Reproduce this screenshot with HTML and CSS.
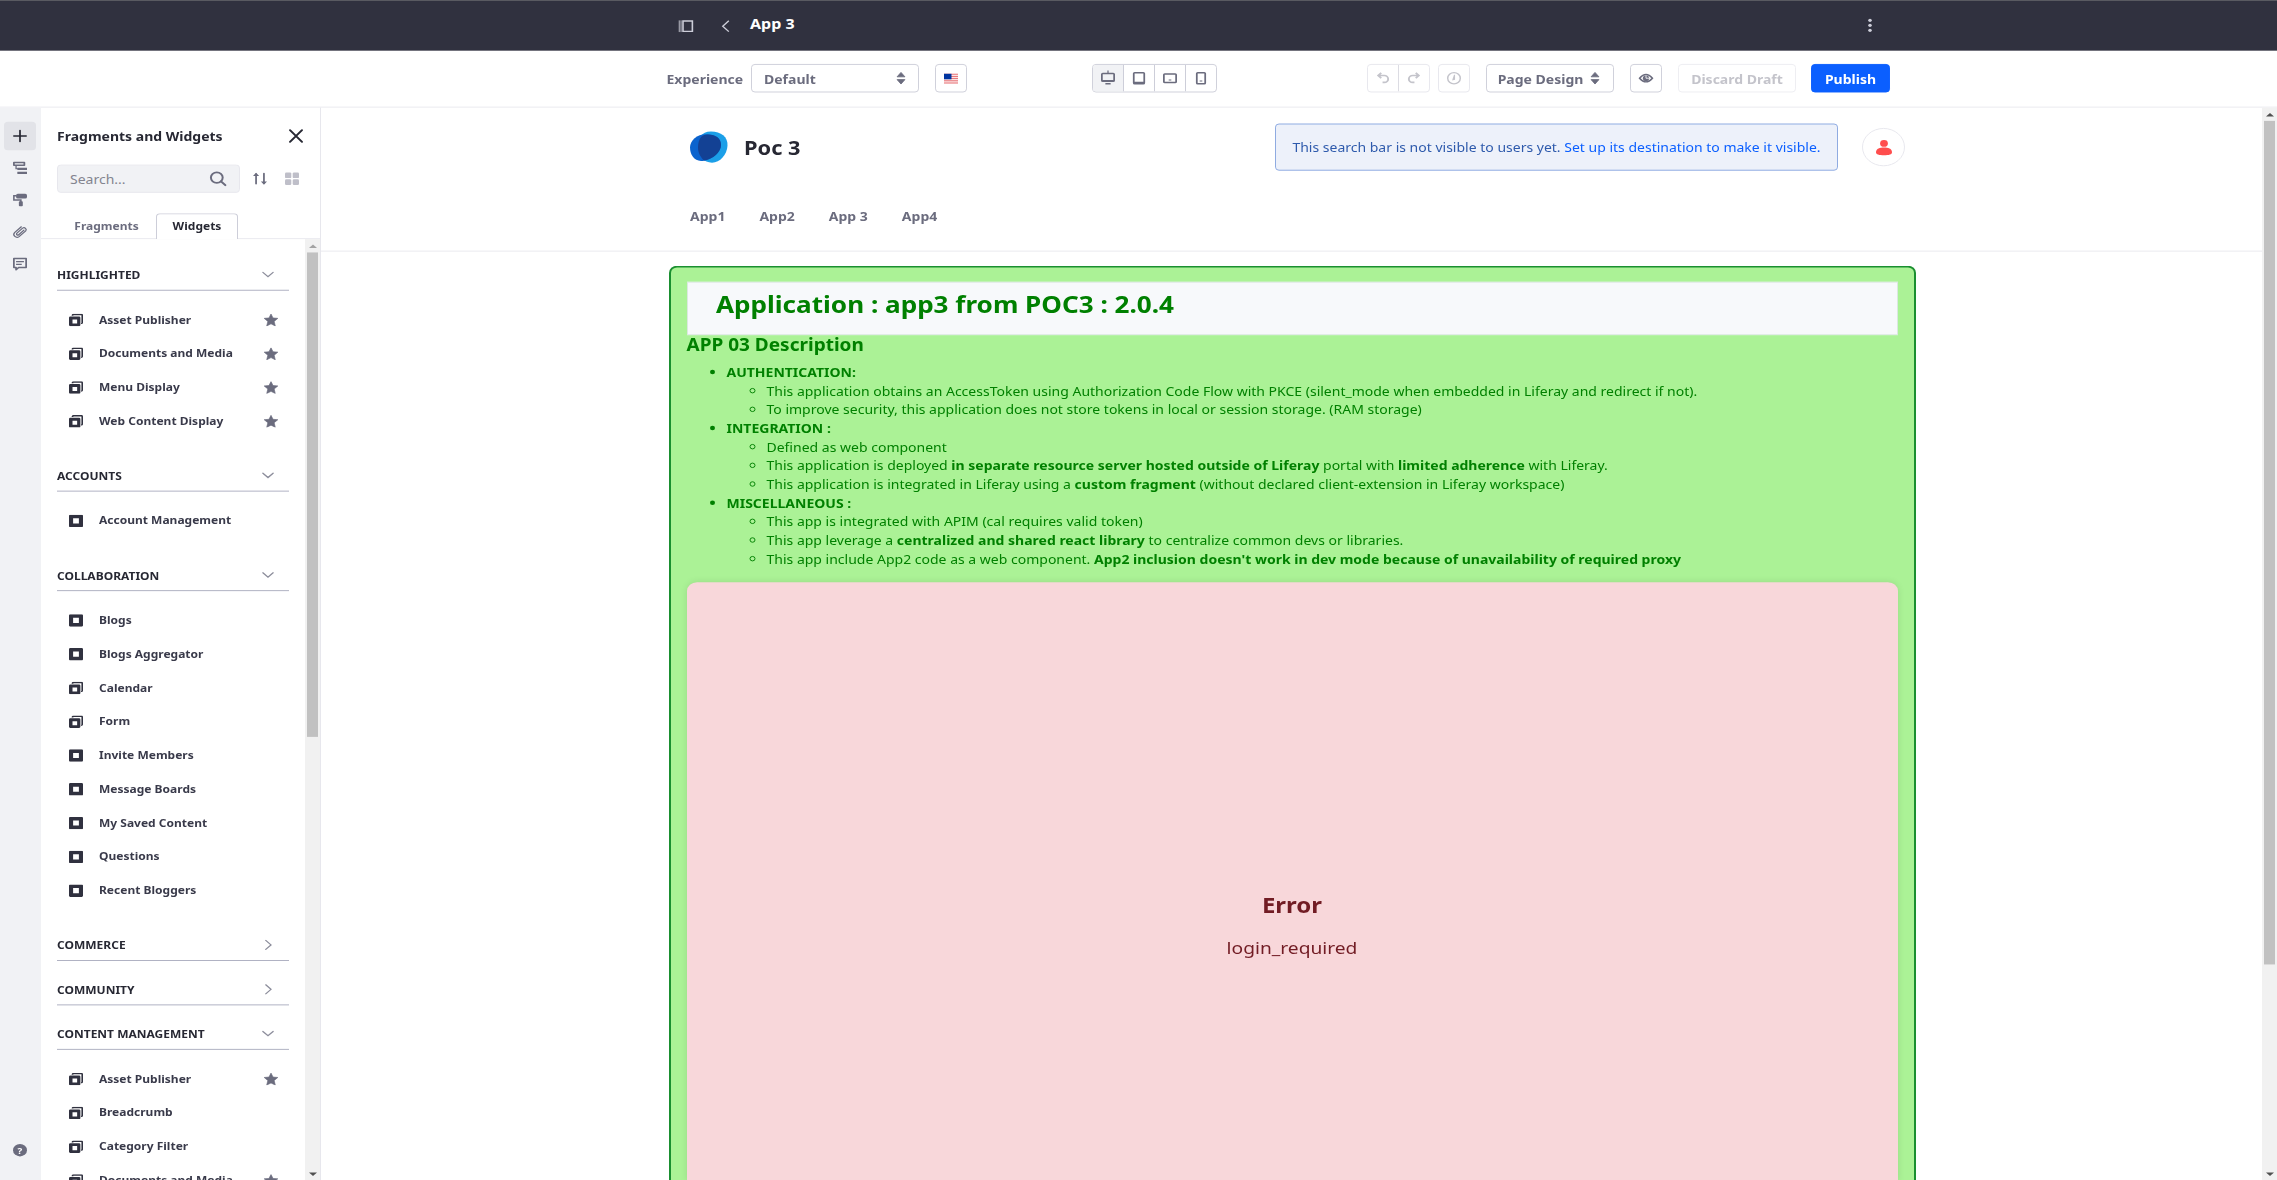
FILE: index.html
```html
<!DOCTYPE html>
<html lang="en">
<head>
<meta charset="utf-8">
<title>App 3</title>
<link rel="stylesheet" href="styles.css">
</head>
<body>
<svg class="sprite" aria-hidden="true">
  <symbol id="i-widget" viewBox="0 0 16 16"><path fill-rule="evenodd" d="M1.500 0h13A1.500 1.500 0 0 1 16 1.500v13a1.500 1.500 0 0 1-1.500 1.500h-13A1.500 1.500 0 0 1 0 14.500v-13A1.500 1.500 0 0 1 1.500 0zm3.200 4.600v6.600h6.600V4.600z"/></symbol>
  <symbol id="i-widgets" viewBox="0 0 16 16"><path fill-rule="evenodd" d="M1.500 3.500h10A1.500 1.500 0 0 1 13 5v9.500a1.500 1.500 0 0 1-1.500 1.500h-10A1.500 1.500 0 0 1 0 14.500V5a1.500 1.500 0 0 1 1.500-1.500zm2.500 3.700v5.300h5.300V7.200z"/><path d="M3 2.500C3 1 3.700 0 5 0h9.300A1.700 1.700 0 0 1 16 1.700v9.600c0 1.300-.8 2-2.200 2v-1.500h.4V1.900H5v.6z"/></symbol>
  <symbol id="i-star" viewBox="0 0 16 16"><path stroke="currentColor" stroke-width=".8" stroke-linejoin="round" d="M8 .3l2.300 5.100 5.500.5-4.200 3.900 1.300 5.900L8 12.900l-4.900 2.800 1.300-5.900L.2 5.900l5.500-.5z"/></symbol>
  <symbol id="i-down" viewBox="0 0 16 16"><path d="M1.200 4.500L8 11l6.800-6.500" fill="none" stroke="currentColor" stroke-width="1.800" stroke-linecap="round"/></symbol>
  <symbol id="i-right" viewBox="0 0 16 16"><path d="M5 1.200L12 8l-7 6.800" fill="none" stroke="currentColor" stroke-width="1.800" stroke-linecap="round"/></symbol>
  <symbol id="i-carets" viewBox="0 0 16 16"><path d="M8 .5l4.500 5.700H3.500zM8 15.500l4.500-5.700H3.500z" stroke="currentColor" stroke-linejoin="round"/></symbol>
</svg>
<div class="page">
  <header class="topbar">
    <svg class="ic16 productmenu" viewBox="0 0 16 16"><path d="M.8 1v14M2.700 1v14" stroke="currentColor" stroke-width="1"/><path d="M4.800 1.800h10v12.400h-10z" fill="none" stroke="currentColor" stroke-width="1.700"/></svg>
    <svg class="ic16 back" viewBox="0 0 16 16"><path d="M11 1.500L4.500 8l6.500 6.500" fill="none" stroke="currentColor" stroke-width="1.500"/></svg>
    <h1>App 3</h1>
    <svg class="ic16 kebab" viewBox="0 0 16 16"><circle cx="8" cy="2" r="1.900"/><circle cx="8" cy="8" r="1.900"/><circle cx="8" cy="14" r="1.900"/></svg>
  </header>
  <div class="toolbar">
    <span class="exp">Experience</span>
    <div class="btn select">Default<svg class="ic14"><use href="#i-carets"/></svg></div>
    <div class="btn flag"><svg width="14" height="11" viewBox="0 0 14 11"><path fill="#fbe3e3" d="M0 0h14v11H0z"/><path stroke="#e8787c" stroke-width="1.100" d="M0 .6h14M0 3h14M0 5.400h14M0 7.800h14M0 10.300h14"/><path fill="#0035a0" d="M0 0h7.500v6.200H0z"/></svg></div>
    <div class="group devices">
      <span class="on"><svg class="ic14" viewBox="0 0 16 16"><path fill-rule="evenodd" d="M2 1h12a2 2 0 0 1 2 2v8a2 2 0 0 1-2 2H2a2 2 0 0 1-2-2V3a2 2 0 0 1 2-2zm0 1.800v7.400h12V2.800zM7.300-2h1.400v3H7.300zM5 14h6v2H5z"/></svg></span>
      <span><svg class="ic14" viewBox="0 0 16 16"><path fill-rule="evenodd" d="M3 0h10a2 2 0 0 1 2 2v12a2 2 0 0 1-2 2H3a2 2 0 0 1-2-2V2a2 2 0 0 1 2-2zm0 2v10.500h10V2z"/></svg></span>
      <span><svg class="ic14" viewBox="0 0 16 16"><path fill-rule="evenodd" d="M2 1.500h12a2 2 0 0 1 2 2v9a2 2 0 0 1-2 2H2a2 2 0 0 1-2-2v-9a2 2 0 0 1 2-2zm0 2v9h12v-9zM6.500 9.800h3v1.200h-3z"/></svg></span>
      <span><svg class="ic14" viewBox="0 0 16 16"><path fill-rule="evenodd" d="M4.200 0h7.600a2 2 0 0 1 2 2v12a2 2 0 0 1-2 2H4.200a2 2 0 0 1-2-2V2a2 2 0 0 1 2-2zm0 2v12h7.600V2zM6.500 11h3v1.300h-3z"/></svg></span>
    </div>
    <div class="group history">
      <span><svg class="ic14" viewBox="0 0 16 16"><path d="M6 1L2.500 4.500 6 8M3 4.500h6.500a4.300 4.300 0 0 1 0 8.800H7.500" fill="none" stroke="currentColor" stroke-width="2.200"/></svg></span>
      <span><svg class="ic14" viewBox="0 0 16 16"><path d="M10 1l3.500 3.500L10 8M13 4.500H6.500a4.300 4.300 0 0 0 0 8.800h2" fill="none" stroke="currentColor" stroke-width="2.200"/></svg></span>
    </div>
    <div class="btn clock"><svg class="ic14" viewBox="0 0 16 16"><circle cx="8" cy="8" r="7.200" fill="none" stroke="currentColor" stroke-width="1.700"/><path d="M8 3.500h1.200V10L5.800 11z"/></svg></div>
    <div class="btn design">Page Design<svg class="ic14"><use href="#i-carets"/></svg></div>
    <div class="btn eye"><svg class="ic14" viewBox="0 0 16 16"><path fill="none" stroke="currentColor" stroke-width="1.700" d="M.6 8Q8-1.500 15.400 8 8 17.500.6 8z"/><circle cx="8" cy="8" r="3.600"/><path d="M8 4.500V8h3.500" stroke="#fff" fill="none"/></svg></div>
    <div class="btn discard">Discard Draft</div>
    <div class="btn publish">Publish</div>
  </div>
  <div class="work">
    <nav class="rail">
      <span class="on"><svg class="ic14" viewBox="0 0 16 16"><path d="M8 1v14M1 8h14" stroke="currentColor" stroke-width="2" stroke-linecap="round"/></svg></span>
      <span><svg class="ic14" viewBox="0 0 16 16"><path d="M1 1h12v3.500H1z" fill="none" stroke="currentColor" stroke-width="2" stroke-linejoin="round"/><path d="M3.500 5v4H5M5 9h11M5.500 14H16" stroke="currentColor" stroke-width="1.500" fill="none"/><path d="M5 7.600h11v2.900H5zM5 12.800h11v2.900H5z"/></svg></span>
      <span><svg class="ic14" viewBox="0 0 16 16"><rect x="3.500" y="0" width="12.500" height="6" rx="2"/><path d="M4 2.500H1V8h8v2.500" fill="none" stroke="currentColor" stroke-width="1.800"/><rect x="6.700" y="9.500" width="4.500" height="6.500" rx="1"/></svg></span>
      <span><svg class="ic14" viewBox="0 0 16 16"><path d="M12.500 5.500L6.500 11.500a1.400 1.400 0 0 1-2-2L11 3a2.500 2.500 0 0 1 3.500 3.500L7 14a3.700 3.700 0 0 1-5.200-5.200L9.500 1.300" fill="none" stroke="currentColor" stroke-width="1.500" stroke-linecap="round"/></svg></span>
      <span><svg class="ic14" viewBox="0 0 16 16"><path d="M1 1h14v11.500H6.500l-3 2.800v-2.800H1z" fill="none" stroke="currentColor" stroke-width="2" stroke-linejoin="round"/><path d="M3.500 5h9M3.500 8.500h6.500" stroke="currentColor" stroke-width="1.600"/></svg></span>
      <div class="help">?</div>
    </nav>
    <aside class="panel">
      <div class="panel-title">Fragments and Widgets<svg class="ic16" viewBox="0 0 16 16"><path d="M2 1.500l12 13M14 1.500l-12 13" stroke="currentColor" stroke-width="2" stroke-linecap="round"/></svg></div>
      <div class="search-row">
        <div class="search">Search...<svg class="ic16" viewBox="0 0 16 16"><circle cx="6.800" cy="6.800" r="5.900" fill="none" stroke="currentColor" stroke-width="2"/><path d="M11 11l4.300 4.300" stroke="currentColor" stroke-width="2.200" stroke-linecap="round"/></svg></div>
        <svg class="ic14 sort" viewBox="0 0 16 16"><path d="M3.500 14.500V2M12.500 1.500V14" stroke="currentColor" stroke-width="2" stroke-linecap="round"/><path d="M0 4.500L3.500.3 7 4.500zM9 11.500l3.500 4.200 3.500-4.200z"/></svg>
        <svg class="ic14 grid" viewBox="0 0 16 16"><rect width="7.200" height="7.200" rx="1.500"/><rect x="8.800" width="7.200" height="7.200" rx="1.500"/><rect y="8.800" width="7.200" height="7.200" rx="1.500"/><rect x="8.800" y="8.800" width="7.200" height="7.200" rx="1.500"/></svg>
      </div>
      <div class="tabs"><span>Fragments</span><span class="active">Widgets</span></div>
      <div class="scroll">
        <div class="list">
          <h3>HIGHLIGHTED<svg><use href="#i-down"/></svg></h3>
          <ul>
            <li><svg><use href="#i-widgets"/></svg>Asset Publisher<svg class="star"><use href="#i-star"/></svg></li>
            <li><svg><use href="#i-widgets"/></svg>Documents and Media<svg class="star"><use href="#i-star"/></svg></li>
            <li><svg><use href="#i-widgets"/></svg>Menu Display<svg class="star"><use href="#i-star"/></svg></li>
            <li><svg><use href="#i-widgets"/></svg>Web Content Display<svg class="star"><use href="#i-star"/></svg></li>
          </ul>
          <h3>ACCOUNTS<svg><use href="#i-down"/></svg></h3>
          <ul>
            <li><svg><use href="#i-widget"/></svg>Account Management</li>
          </ul>
          <h3>COLLABORATION<svg><use href="#i-down"/></svg></h3>
          <ul>
            <li><svg><use href="#i-widget"/></svg>Blogs</li>
            <li><svg><use href="#i-widget"/></svg>Blogs Aggregator</li>
            <li><svg><use href="#i-widgets"/></svg>Calendar</li>
            <li><svg><use href="#i-widgets"/></svg>Form</li>
            <li><svg><use href="#i-widget"/></svg>Invite Members</li>
            <li><svg><use href="#i-widget"/></svg>Message Boards</li>
            <li><svg><use href="#i-widget"/></svg>My Saved Content</li>
            <li><svg><use href="#i-widget"/></svg>Questions</li>
            <li><svg><use href="#i-widget"/></svg>Recent Bloggers</li>
          </ul>
          <h3>COMMERCE<svg><use href="#i-right"/></svg></h3>
          <h3>COMMUNITY<svg><use href="#i-right"/></svg></h3>
          <h3>CONTENT MANAGEMENT<svg><use href="#i-down"/></svg></h3>
          <ul>
            <li><svg><use href="#i-widgets"/></svg>Asset Publisher<svg class="star"><use href="#i-star"/></svg></li>
            <li><svg><use href="#i-widgets"/></svg>Breadcrumb</li>
            <li><svg><use href="#i-widgets"/></svg>Category Filter</li>
            <li><svg><use href="#i-widgets"/></svg>Documents and Media<svg class="star"><use href="#i-star"/></svg></li>
          </ul>
        </div>
        <div class="bar"><i class="up dim"></i><b class="thumb-panel"></b><i class="down"></i></div>
      </div>
    </aside>
    <main>
      <div class="canvas">
        <div class="site-head">
          <div class="wrap">
            <div class="brand-row">
              <svg class="logo" width="38" height="35" viewBox="0 0 38 35" preserveAspectRatio="none"><path fill="#1b9fe8" d="M21 0C31 0 38 6 37.500 16S30 35 22 35 8 28 8 18 11 0 21 0z"/><path fill="#0b63ce" d="M16 3c9 0 15 4 15 12S21 33 11 33C4 33 0 26 0 18S7 3 16 3z"/><path fill="#134194" d="M11.500 5.500Q14 3 18 3.200C26 3.500 31 7.500 31 15c0 8-8 16-17 17.500C10.500 29 8 24 8 18c0-5 1-9.500 3.500-12.500z"/></svg>
              <span class="brand">Poc 3</span>
              <div class="notice"><span>This search bar is not visible to users yet. <a>Set up its destination to make it visible.</a></span></div>
              <div class="avatar"><svg class="ic16" viewBox="0 0 16 16"><circle cx="8" cy="3.300" r="3.900"/><path d="M0 13.200c0-4 4-5.200 8-5.200s8 1.200 8 5.200c0 2.500-3 3.400-8 3.400s-8-.9-8-3.400z"/></svg></div>
            </div>
            <div class="menu"><span>App1</span><span>App2</span><span>App 3</span><span>App4</span></div>
          </div>
        </div>
        <div class="holder">
          <section class="app">
            <div class="app-title">Application : app3 from POC3 : 2.0.4</div>
            <h2>APP 03 Description</h2>
            <ul>
              <li><b>AUTHENTICATION:</b>
                <ul>
                  <li>This application obtains an AccessToken using Authorization Code Flow with PKCE (silent_mode when embedded in Liferay and redirect if not).</li>
                  <li>To improve security, this application does not store tokens in local or session storage. (RAM storage)</li>
                </ul>
              </li>
              <li><b>INTEGRATION :</b>
                <ul>
                  <li>Defined as web component</li>
                  <li>This application is deployed <b>in separate resource server hosted outside of Liferay</b> portal with <b>limited adherence</b> with Liferay.</li>
                  <li>This application is integrated in Liferay using a <b>custom fragment</b> (without declared client-extension in Liferay workspace)</li>
                </ul>
              </li>
              <li><b>MISCELLANEOUS :</b>
                <ul>
                  <li>This app is integrated with APIM (cal requires valid token)</li>
                  <li>This app leverage a <b>centralized and shared react library</b> to centralize common devs or libraries.</li>
                  <li>This app include App2 code as a web component. <b>App2 inclusion doesn't work in dev mode because of unavailability of required proxy</b></li>
                </ul>
              </li>
            </ul>
            <div class="error"><strong>Error</strong><span>login_required</span></div>
          </section>
        </div>
      </div>
      <div class="bar"><i class="up"></i><b class="thumb-page"></b><i class="down"></i></div>
    </main>
  </div>
</div>
</body>
</html>
```
FILE: styles.css
```css
* { box-sizing: border-box; }
html { background: #fff; overflow: hidden; }
body {
  margin: 0;
  width: 2277px;
  height: 1180px;
  overflow: hidden;
  font: 14px/21px "Noto Sans", sans-serif;
  color: #272833;
}
/* the layout is authored on a 1327.5px tall page and compressed vertically */
.page {
  width: 2277px;
  height: 1327.5px;
  overflow: hidden;
  transform: scaleY(.88889);
  transform-origin: 0 0;
  display: flex;
  flex-direction: column;
}
svg { fill: currentColor; flex: none; display: block; overflow: visible; }
.sprite { position: absolute; width: 0; height: 0; }
.ic14 { width: 14px; height: 14px; }
.ic16 { width: 16px; height: 16px; }
ul { list-style: none; margin: 0; padding: 0; }

.topbar {
  height: 56.5px;
  flex: none;
  border-top: 1px solid #5f6066;
  background: #30313f;
  color: #cdced9;
  display: flex;
  align-items: center;
  padding: 0 399.5px 2px 678px;
}
.topbar h1 { margin: 0 0 0 16px; font-size: 16px; font-weight: 700; color: #fff; }
.productmenu { margin-top: 4px; }
.back { margin: 4px 0 0 24px; }
.kebab { margin-left: auto; margin-top: 1px; }
.topbar .ic16 { height: 15px; }

.toolbar {
  height: 64.5px;
  flex: none;
  border-bottom: 1px solid #e7e7ed;
  display: flex;
  align-items: center;
  padding-left: 666.5px;
  font-weight: 700;
  color: #6b6c7e;
}
.btn {
  height: 32px;
  border: 1px solid #cdced9;
  border-radius: 4px;
  display: flex;
  align-items: center;
  justify-content: center;
  flex: none;
}
.exp { width: 84.5px; }
.select { width: 168px; padding: 0 10.5px 0 12px; justify-content: space-between; }
.flag { width: 32px; margin-left: 16px; }
.group { display: flex; height: 32px; border: 1px solid #cdced9; border-radius: 4px; overflow: hidden; }
.group span { flex: 1; display: flex; align-items: center; justify-content: center; }
.group span + span { border-left: 1px solid #cdced9; }
.group .on { background: #f1f2f5; }
.devices { width: 125px; margin-left: 125px; }
.history { width: 63px; margin-left: 150px; color: #c4c4cb; border-color: #e7e7ed; }
.history span + span { border-color: #dcdce3; }
.clock { width: 32px; margin-left: 8px; color: #c4c4cb; border-color: #e7e7ed; }
.design { width: 128px; margin-left: 16px; gap: 5px; }
.eye { width: 32px; margin-left: 16px; }
.discard { width: 118px; margin-left: 16px; color: #c4c4cb; border-color: #ededf1; }
.publish { width: 79px; margin-left: 15px; background: #0b5fff; border-color: #0b5fff; color: #fff; }

.work { flex: 1; min-height: 0; display: flex; }
.rail {
  width: 41px;
  background: #f1f2f5;
  color: #6b6c7e;
  padding: 15.5px 5px 20px 4px;
  display: flex;
  flex-direction: column;
  gap: 4px;
}
.rail span { height: 32px; border-radius: 4px; display: flex; align-items: center; justify-content: center; }
.rail .on { background: #e2e3e8; color: #272833; }
.help {
  margin: auto auto 7px;
  width: 14px;
  height: 14px;
  border-radius: 50%;
  background: #6b6c7e;
  color: #fff;
  font: 700 10px/14px "Noto Sans", sans-serif;
  text-align: center;
}

.panel { width: 280px; border-right: 1px solid #e7e7ed; display: flex; flex-direction: column; }
.panel-title {
  height: 64px;
  padding: 0 16px;
  display: flex;
  align-items: center;
  justify-content: space-between;
  font-weight: 700;
}
.search-row { display: flex; align-items: center; padding: 0 16px; }
.search {
  width: 183px;
  height: 32px;
  border: 1px solid #e7e7ed;
  border-radius: 4px;
  background: #f1f2f5;
  color: #83848f;
  display: flex;
  align-items: center;
  justify-content: space-between;
  padding: 0 13px 0 12px;
}
.search svg, .sort { color: #6b6c7e; }
.sort { margin-left: 13px; }
.grid { margin-left: 18px; color: #bfbfc9; }
.tabs {
  height: 52px;
  flex: none;
  border-bottom: 1px solid #e7e7ed;
  display: flex;
  align-items: flex-end;
  padding-left: 16px;
  font-size: 12px;
  font-weight: 700;
  color: #6b6c7e;
}
.tabs span { width: 99px; height: 28px; line-height: 29px; text-align: center; }
.tabs .active {
  width: 82px;
  height: 29px;
  line-height: 28px;
  margin-bottom: -1px;
  border: 1px solid #cdced9;
  border-bottom: 0;
  border-radius: 4px 4px 0 0;
  background: #fff;
  color: #272833;
}
.scroll { flex: 1; min-height: 0; display: flex; overflow: hidden; }
.list { flex: 1; padding: 8px 16px 0; font-size: 12px; font-weight: 700; }
.list h3 {
  margin: 0;
  height: 50px;
  border-bottom: 1px solid #a7a9bc;
  font-size: 12px;
  line-height: 21px;
  font-weight: 700;
  display: flex;
  justify-content: space-between;
  padding: 22px 15px 0 0;
}
.list h3 svg { width: 12px; height: 12px; margin-top: 4px; color: #8d8e9c; }
.list ul { padding: 13.5px 0 10.5px; }
.list li { height: 38px; display: flex; align-items: center; padding: 0 11px 0 12px; color: #393a4a; }
.list li svg { width: 14px; height: 14px; margin-right: 16px; color: #30313f; }
.list li .star { margin: 0 0 0 auto; color: #6b6c7e; }

.bar {
  width: 15px;
  background: #f1f1f1;
  display: flex;
  flex-direction: column;
  align-items: center;
  flex: none;
}
.bar b { width: 11px; background: #c1c1c1; }
.bar i { width: 0; height: 0; border: 4px solid transparent; flex: none; }
.bar .up { border-top: 0; border-bottom-color: #505050; margin: 6px 0 5px; }
.bar .dim { border-bottom-color: #a3a3a3; }
.bar .down { border-bottom: 0; border-top-color: #505050; margin: auto 0 5px; }
.thumb-panel { height: 545px; }
.thumb-page { height: 949px; }

main { flex: 1; display: flex; }
.canvas { flex: 1; display: flex; flex-direction: column; }
.wrap { width: 1248px; margin: 0 auto; }
.site-head { height: 161.5px; border-bottom: 1px solid #e7e7ed; flex: none; }
.brand-row { display: flex; align-items: center; padding: 18px 10.5px 0 22px; }
.brand { margin-left: 16.5px; font-size: 21.8px; line-height: 30px; font-weight: 700; }
.notice {
  width: 563px;
  height: 53px;
  margin-left: auto;
  border: 1px solid #89a7e0;
  border-radius: 4px;
  background: #edf1fa;
  color: #2e5aac;
  display: flex;
  align-items: center;
  justify-content: center;
  white-space: nowrap;
}
.notice a { color: #0b5fff; }
.avatar {
  width: 43px;
  height: 43px;
  margin-left: 24px;
  border: 1px solid #e7e7ed;
  border-radius: 50%;
  color: #ff4d4d;
  display: flex;
  align-items: center;
  justify-content: center;
}
.menu { display: flex; gap: 34px; padding: 40.5px 0 0 22.5px; font-weight: 700; color: #6b6c7e; }

.holder {
  flex: 1;
  width: 1247px;
  margin: 0 auto;
  padding-top: 16px;
  min-height: 0;
  display: flex;
  position: relative;
  left: .5px;
}
.app {
  flex: 1;
  border: 2px solid #1a8f30;
  border-bottom: 0;
  border-radius: 8px 8px 0 0;
  background: #abf296;
  color: #008000;
  padding: 16px 16px 0;
  display: flex;
  flex-direction: column;
}
.app-title {
  height: 60px;
  flex: none;
  background: #f7f9fb;
  border: 1px solid #dbe8e0;
  padding: 3px 28.5px;
  font-size: 26.1px;
  line-height: 42px;
  font-weight: 700;
}
.app h2 { margin: 0; font-size: 19px; line-height: 22px; font-weight: 700; }
.app ul { list-style: disc; padding-left: 40px; }
.app h2 + ul { margin-top: 9.5px; }
.app ul ul { list-style: circle; }
.app b { font-weight: 700; }
.error {
  flex: 1;
  margin-top: 16px;
  border-radius: 10px 10px 0 0;
  background: #f8d7da;
  box-shadow: 0 0 8px rgba(0, 0, 0, .1);
  color: #721c24;
  display: flex;
  flex-direction: column;
  align-items: center;
  padding-top: 346px;
  font-size: 19.2px;
  line-height: 29px;
}
.error strong { font-size: 24px; line-height: 33px; font-weight: 700; margin-bottom: 17px; }
```
